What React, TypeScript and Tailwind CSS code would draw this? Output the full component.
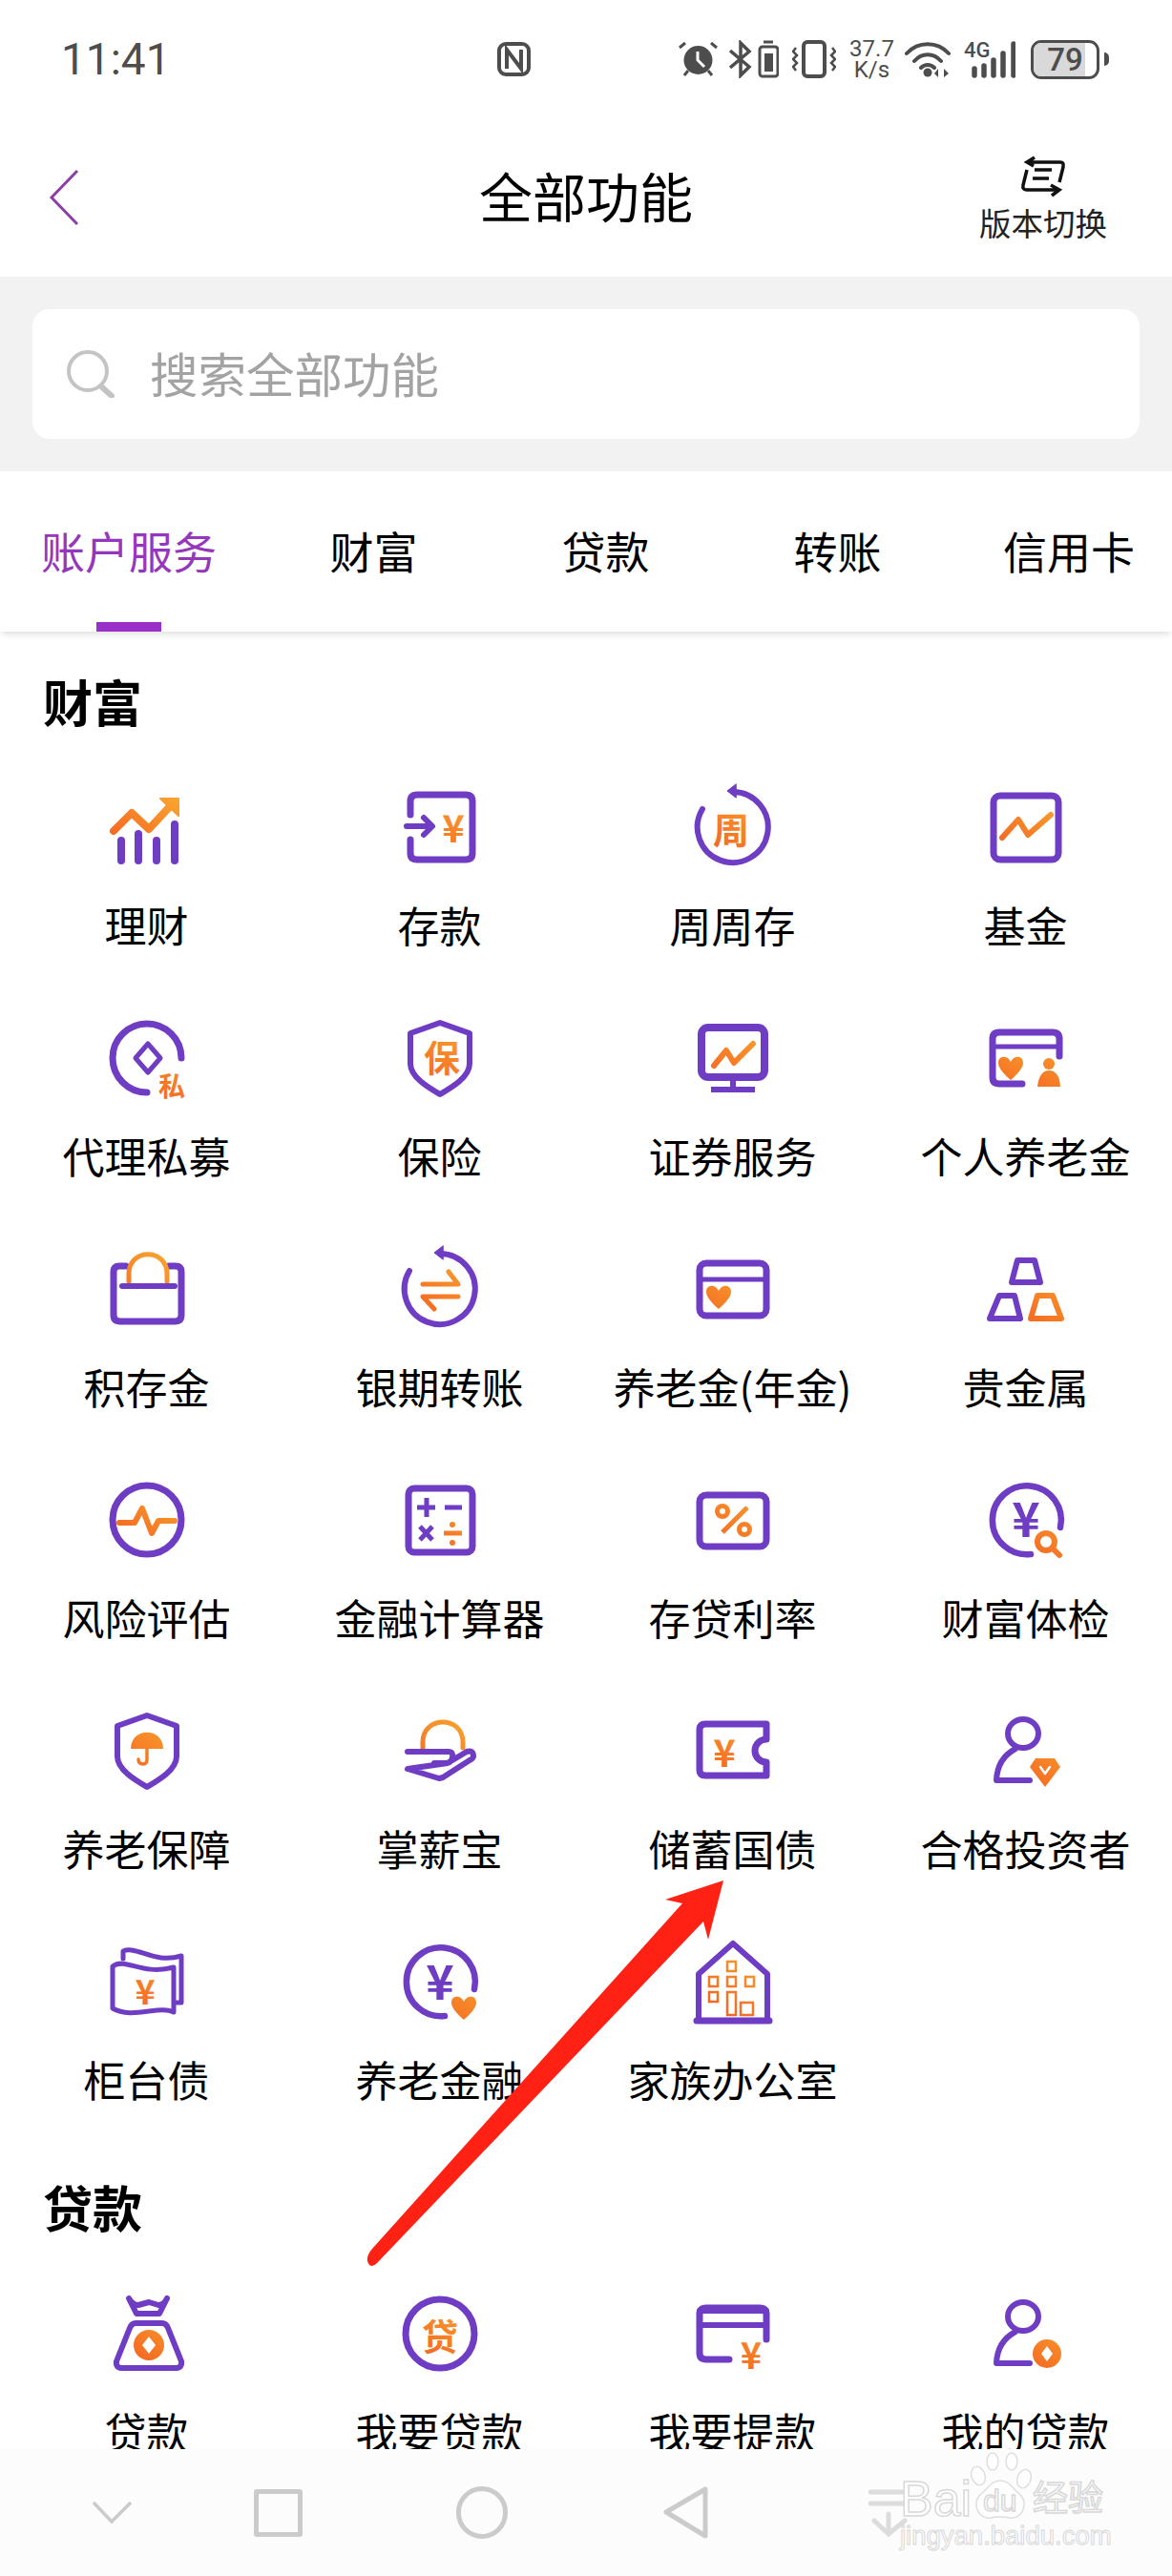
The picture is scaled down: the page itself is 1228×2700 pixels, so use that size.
import type { ReactNode } from 'react'

const P = '#6f3cc4'
const O = 'url(#orange)'

function Ico({ children }: { children: ReactNode }) {
  return (
    <svg
      viewBox="-50 -50 100 100"
      className="h-[100px] w-[100px] shrink-0"
      fill="none"
      stroke={P}
      strokeWidth={7}
      strokeLinecap="round"
      strokeLinejoin="round"
    >
      {children}
    </svg>
  )
}

function Heart({ x, y, s = 1 }: { x: number; y: number; s?: number }) {
  return (
    <path
      transform={`translate(${x} ${y}) scale(${s})`}
      d="M0 13 C-8 6 -13 0 -13 -5 C-13 -13 -3 -13 0 -6 C3 -13 13 -13 13 -5 C13 0 8 6 0 13Z"
      fill={O}
      stroke="none"
    />
  )
}

function Glyph({ x, y, size, children, fill = O }: { x: number; y: number; size: number; children: string; fill?: string }) {
  return (
    <text
      x={x}
      y={y}
      fontSize={size}
      fontWeight={700}
      textAnchor="middle"
      dominantBaseline="central"
      fill={fill}
      stroke="none"
    >
      {children}
    </text>
  )
}

const Zig = ({ dy = 0 }: { dy?: number }) => (
  <path d="M-25 11 L-8 -8 L2 8 L26 -13" transform={`translate(0 ${dy})`} stroke={O} strokeWidth={6} />
)

const LoopRing = () => (
  <>
    <path d="M0 -37 A37 37 0 1 1 -32 -19" strokeWidth={6} />
    <path d="M3 -45 L-6 -38 L3 -31Z" fill={P} strokeWidth={1} />
  </>
)

const OpenRing = () => <path d="M36 8 A36 36 0 1 0 5 36" strokeWidth={6.5} />

const Shield = () => <path d="M0 -37 L31 -26 V6 C31 20 12 31 0 38 C-12 31 -31 20 -31 6 V-26Z" strokeWidth={6} />

const Person = () => (
  <>
    <ellipse cx={-3} cy={-18} rx={16} ry={15} strokeWidth={6} />
    <path d="M-11 -2 Q-30 8 -31 31 H4" strokeWidth={6} />
  </>
)

const OpenCard = () => (
  <>
    <path d="M-4 27 H-28 Q-35 27 -35 20 V-20 Q-35 -27 -28 -27 H28 Q35 -27 35 -20 V6" />
    <path d="M-35 -9 H35" strokeWidth={6} />
    <path d="M-35 -24 H35" strokeWidth={6} />
  </>
)

const icons: Record<string, ReactNode> = {
  理财: (
    <>
      <path d="M-27 14 V35 M-9 7 V35 M10 14 V35 M29 -3 V35" strokeWidth={8} />
      <path d="M-35 4 L-16 -15 L2 2 L27 -25" stroke={O} strokeWidth={8} />
      <path d="M14 -30 H33 V-12Z" fill={O} stroke={O} strokeWidth={2} />
    </>
  ),
  存款: (
    <>
      <path d="M-31 -13 V-27 Q-31 -34 -24 -34 H27 Q34 -34 34 -27 V27 Q34 34 27 34 H-24 Q-31 34 -31 27 V13" />
      <path d="M-35 -1 H-10 M-17 -10 L-8 -1 L-17 8" strokeWidth={6} />
      <Glyph x={14} y={-1} size={40}>¥</Glyph>
    </>
  ),
  周周存: (
    <>
      <LoopRing />
      <Glyph x={-2} y={0} size={38}>周</Glyph>
    </>
  ),
  基金: (
    <>
      <rect x={-34} y={-33} width={68} height={67} rx={7} strokeWidth={7} />
      <Zig />
    </>
  ),
  代理私募: (
    <>
      <path d="M36 0 A36 36 0 1 0 0 36" strokeWidth={7} />
      <path d="M1 -15 L14 0 L1 15 L-12 0Z" strokeWidth={5} />
      <Glyph x={26} y={28} size={28}>私</Glyph>
    </>
  ),
  保险: (
    <>
      <Shield />
      <Glyph x={2} y={-3} size={38}>保</Glyph>
    </>
  ),
  证券服务: (
    <>
      <rect x={-33} y={-32} width={66} height={52} rx={7} strokeWidth={8} />
      <path d="M-20 8 L-7 -8 L1 5 L21 -15" stroke={O} strokeWidth={6} />
      <path d="M0 22 V32 M-23 33 H23" strokeWidth={6} strokeLinecap="butt" />
    </>
  ),
  个人养老金: (
    <>
      <path d="M-4 27 H-28 Q-35 27 -35 20 V-20 Q-35 -27 -28 -27 H28 Q35 -27 35 -20 V-2" />
      <path d="M-35 -12 H35" strokeWidth={5} />
      <Heart x={-16} y={10} />
      <circle cx={24} cy={6} r={6} fill={O} stroke="none" />
      <path d="M12 30 Q14 13 24 13 Q35 13 36 30Z" fill={O} stroke="none" />
    </>
  ),
  积存金: (
    <>
      <path d="M-22 -24 H-29 Q-35 -24 -35 -18 V27 Q-35 34 -28 34 H29 Q36 34 36 27 V-18 Q36 -24 30 -24 H23" strokeWidth={7} />
      <path d="M-19 -8 V-16 C-19 -43 21 -43 21 -16 V-8" stroke={O} strokeWidth={5} />
      <path d="M-26 -3 H29" strokeWidth={6} />
    </>
  ),
  银期转账: (
    <>
      <LoopRing />
      <path d="M-18 -5 H19 L9 -18 M19 8 H-18 L-6 21" stroke={O} strokeWidth={5} />
    </>
  ),
  '养老金(年金)': (
    <>
      <rect x={-35} y={-27} width={70} height={55} rx={7} />
      <path d="M-35 -10 H35" strokeWidth={5} />
      <Heart x={-15} y={8} />
    </>
  ),
  贵金属: (
    <>
      <path d="M-9 -30 H9 L15 -7 H-15Z" strokeWidth={6} />
      <path d="M-28 7 H-12 L-6 31 H-38Z" strokeWidth={6} />
      <path d="M12 7 H28 L37 31 H5Z" stroke={O} strokeWidth={6} />
    </>
  ),
  风险评估: (
    <>
      <circle r={36} />
      <path d="M-29 3 H-13 L-5 -12 L5 14 L12 1 H29" stroke={O} strokeWidth={6} />
    </>
  ),
  金融计算器: (
    <>
      <rect x={-33} y={-33} width={67} height={67} rx={6} />
      <path d="M-24 -13 H-5 M-14 -23 V-3 M5 -13 H23 M-21 7 L-8 21 M-8 7 L-21 21" strokeWidth={5} strokeLinecap="butt" />
      <path d="M4 14 H23" stroke={O} strokeWidth={5} strokeLinecap="butt" />
      <circle cx={13} cy={5} r={3} fill={O} stroke="none" />
      <circle cx={13} cy={24} r={3} fill={O} stroke="none" />
    </>
  ),
  存贷利率: (
    <>
      <rect x={-35} y={-26} width={70} height={54} rx={7} strokeWidth={7} />
      <circle cx={-11} cy={-9} r={5.5} stroke={O} strokeWidth={5} />
      <circle cx={12} cy={10} r={5.5} stroke={O} strokeWidth={5} />
      <path d="M-11 13 L15 -13" stroke={O} strokeWidth={5} strokeLinecap="butt" />
    </>
  ),
  财富体检: (
    <>
      <OpenRing />
      <Glyph x={0} y={-4} size={50} fill={P}>¥</Glyph>
      <circle cx={21} cy={23} r={9} fill="#fff" stroke={O} strokeWidth={6} />
      <path d="M28 30 L35 37" stroke={O} strokeWidth={6} />
    </>
  ),
  养老保障: (
    <>
      <Shield />
      <path d="M-17 -2 C-17 -25 17 -25 17 -2Z" fill={O} stroke="none" />
      <path d="M0 -4 V9 Q0 14 -4 14 Q-9 14 -9 9" stroke={O} strokeWidth={3.5} />
    </>
  ),
  掌薪宝: (
    <>
      <path d="M-18 -3 V-9 C-18 -37 24 -37 24 -9 V-3" stroke={O} strokeWidth={5} />
      <path d="M-34 1 H9 Q14 1 13 7 Q12 13 6 13 H-6 M8 13 L28 1 Q35 -1 35 6 Q35 8 31 10 L3 28 L-1 29 L-34 19Z" strokeWidth={6} />
    </>
  ),
  储蓄国债: (
    <>
      <path d="M-29 -28 H35 V-12 A12 12 0 0 0 35 12 V26 H-29 Q-35 26 -35 20 V-22 Q-35 -28 -29 -28Z" />
      <Glyph x={-9} y={0} size={40}>¥</Glyph>
    </>
  ),
  合格投资者: (
    <>
      <Person />
      <path d="M10 8 H30 L36 17 L20 38 L4 17Z" fill={O} stroke="none" />
      <path d="M15 17 L20 24 L25 17" stroke="#fff" strokeWidth={2.5} />
    </>
  ),
  柜台债: (
    <>
      <path d="M-25 -24 V-32 C-10 -38 8 -18 36 -27 V22 H31" strokeWidth={5} />
      <path d="M-36 -16 C-22 -26 -6 -6 28 -15 V32 C14 24 -16 40 -36 28Z" strokeWidth={5} />
      <Glyph x={-2} y={8} size={36}>¥</Glyph>
    </>
  ),
  养老金融: (
    <>
      <OpenRing />
      <Glyph x={0} y={-3} size={50} fill={P}>¥</Glyph>
      <Heart x={25} y={27} />
    </>
  ),
  家族办公室: (
    <>
      <path d="M-36 38 V-8 L0 -40 L36 -8 V38" strokeWidth={6} />
      <path d="M-38 41 H38" strokeWidth={7} />
      <g stroke={O} strokeWidth={2.5} strokeLinecap="butt" strokeLinejoin="miter">
        <rect x={-6} y={-21} width={9} height={10} />
        <rect x={-25} y={-5} width={9} height={10} />
        <rect x={-6} y={-5} width={9} height={10} />
        <rect x={13} y={-5} width={9} height={10} />
        <rect x={-25} y={11} width={9} height={10} />
        <path d="M-6 11 H3 V35 H-6Z" />
        <rect x={8} y={22} width={13} height={13} />
      </g>
    </>
  ),
  贷款: (
    <>
      <path d="M-19 -37 L-11 -21 H13 L21 -37 Q18 -30 12 -30 L2 -33 L-9 -30 Q-15 -30 -19 -37Z" strokeWidth={6} />
      <path d="M-12 -11 H16 Q20 -11 22 -6 L36 29 Q37 36 30 36 H-26 Q-33 36 -32 29 L-18 -6 Q-16 -11 -12 -11Z" strokeWidth={6} />
      <ellipse cx={2} cy={12} rx={16} ry={16} fill={O} stroke="none" />
      <path d="M2 3 L9 12 L2 21 L-5 12Z" fill="#fff" stroke="none" />
    </>
  ),
  我要贷款: (
    <>
      <circle r={36} />
      <Glyph x={0} y={0} size={38}>贷</Glyph>
    </>
  ),
  我要提款: (
    <>
      <OpenCard />
      <Glyph x={19} y={20} size={38}>¥</Glyph>
    </>
  ),
  我的贷款: (
    <>
      <Person />
      <circle cx={22} cy={21} r={15} fill={O} stroke="none" />
      <path d="M22 13 L28 21 L22 29 L16 21Z" fill="#fff" stroke="none" />
    </>
  ),
}

const wealth = [
  '理财', '存款', '周周存', '基金',
  '代理私募', '保险', '证券服务', '个人养老金',
  '积存金', '银期转账', '养老金(年金)', '贵金属',
  '风险评估', '金融计算器', '存贷利率', '财富体检',
  '养老保障', '掌薪宝', '储蓄国债', '合格投资者',
  '柜台债', '养老金融', '家族办公室',
]
const loans = ['贷款', '我要贷款', '我要提款', '我的贷款']
const tabs = ['账户服务', '财富', '贷款', '转账', '信用卡']

function Item({ name }: { name: string }) {
  return (
    <div className="flex h-[242px] flex-col items-center">
      <Ico>{icons[name]}</Ico>
      <div className="mt-[27px] h-[50px] whitespace-nowrap text-[44px] leading-[50px] text-black">{name}</div>
    </div>
  )
}

function StatusBar() {
  return (
    <div className="flex h-[124px] items-center text-[#4d4d4d]">
      <span className="ml-[64px] w-[113px] font-['Roboto',sans-serif] text-[46px] leading-none">11:41</span>
      <svg viewBox="0 0 35 36" className="ml-[344px] h-[36px] w-[35px]" fill="none" stroke="currentColor">
        <rect x="2" y="2" width="31" height="32" rx="7" strokeWidth="4" />
        <path d="M10 28 V8 L25 28 V8" strokeWidth="4" />
      </svg>
      <svg viewBox="0 0 41 38" className="ml-[155px] h-[38px] w-[41px]" fill="currentColor">
        <circle cx="20.5" cy="20" r="15" />
        <path d="M20 11 V20 L27 27" fill="none" stroke="#fff" strokeWidth="3" />
        <path d="M1 7 L7 2 M40 7 L34 2 M6 36 L10 31 M35 36 L31 31" stroke="currentColor" strokeWidth="3" />
      </svg>
      <svg viewBox="0 0 52 40" className="ml-[12px] h-[40px] w-[52px]" fill="none" stroke="currentColor">
        <path d="M1 11 L21 28 L12 37 V3 L21 12 L1 29" strokeWidth="3.5" />
        <path d="M36 2 H46" strokeWidth="3" />
        <rect x="32" y="7" width="19" height="31" rx="3" strokeWidth="3" />
        <rect x="37" y="14" width="9" height="19" fill="currentColor" stroke="none" />
      </svg>
      <svg viewBox="0 0 46 40" className="ml-[14px] h-[40px] w-[46px]" fill="none" stroke="currentColor">
        <rect x="12" y="2" width="22" height="36" rx="4" strokeWidth="4" />
        <path d="M4 8 L1 12 L5 16 L1 20 L5 24 L1 28 L4 32 M42 8 L45 12 L41 16 L45 20 L41 24 L45 28 L42 32" strokeWidth="2.5" />
      </svg>
      <div className="ml-[14px] flex w-[47px] flex-col items-center font-['Roboto',sans-serif] text-[24px] leading-[22px]">
        <span>37.7</span>
        <span>K/s</span>
      </div>
      <svg viewBox="0 0 48 40" className="ml-[11px] h-[40px] w-[48px]" fill="none" stroke="currentColor" strokeLinecap="round">
        <path d="M2 14 C14 1 34 1 46 14 M10 22 C18 13 30 13 38 22 M17 29 C21 25 27 25 31 29" strokeWidth="4" />
        <circle cx="24" cy="34" r="4.5" fill="currentColor" stroke="none" />
        <path d="M35 30 V39 L31 35Z M41 30 V39 L46 35Z" fill="currentColor" stroke="none" />
      </svg>
      <div className="relative ml-[14px] h-[40px] w-[54px]">
        <span className="absolute left-0 top-0 font-['Roboto',sans-serif] text-[22px] font-medium leading-[22px]">4G</span>
        <svg viewBox="0 0 54 40" className="h-[40px] w-[54px]" stroke="currentColor" strokeWidth="5.5" strokeLinecap="round">
          <path d="M11 30 V37 M21 27 V37 M31 21 V37 M41 14 V37 M52 4 V37" />
        </svg>
      </div>
      <div className="relative ml-[16px] flex h-[41px] w-[72px] items-center justify-center overflow-hidden rounded-[11px] border-[3px] border-[#4d4d4d]">
        <div className="absolute inset-y-0 left-0 w-[54px] bg-[#d9d9d9]" />
        <span className="relative font-['Roboto',sans-serif] text-[33px] font-medium leading-none">79</span>
      </div>
      <div className="ml-[5px] h-[14px] w-[5px] rounded-r-full bg-[#4d4d4d]" />
    </div>
  )
}

function Header() {
  return (
    <div className="grid h-[166px] grid-cols-[1fr_auto_1fr] items-center">
      <svg viewBox="0 0 34 60" className="ml-[50px] h-[60px] w-[34px]" fill="none" stroke="#8d3fa8" strokeWidth="3">
        <path d="M31 2 L4 30 L31 58" />
      </svg>
      <div className="mb-[6px] text-[56px] leading-none text-black">全部功能</div>
      <div className="mr-[68px] flex flex-col items-center justify-self-end">
        <svg viewBox="0 0 48 44" className="h-[44px] w-[48px]" fill="none" stroke="#111" strokeWidth="3.5">
          <path d="M15 2 L7 7 L14 11 M8 7 H42 Q46 7 45 12 L41 28 M7 15 L3 31 Q2 36 7 36 H40 M32 31 L41 36 L33 42 M15 15 H33 M13 24 H30" />
        </svg>
        <span className="mt-[8px] text-[33.5px] leading-[36px] text-[#222]">版本切换</span>
      </div>
    </div>
  )
}

function Search() {
  return (
    <div className="bg-[#f2f2f2] px-[34px] py-[34px]">
      <div className="flex h-[136px] items-center rounded-[18px] bg-white pl-[36px]">
        <svg viewBox="0 0 50 50" className="h-[50px] w-[50px]" fill="none" stroke="#c4c4c4" strokeWidth="4" strokeLinecap="round">
          <circle cx="22" cy="22" r="20" />
          <path d="M36 38 L47 48" strokeWidth="6" />
        </svg>
        <span className="mb-[3px] ml-[37px] text-[50.5px] leading-none text-[#a3a3a3]">搜索全部功能</span>
      </div>
    </div>
  )
}

function Tabs() {
  return (
    <div className="relative z-10 grid h-[168px] grid-cols-[270px_243px_243px_243px_242px] items-center overflow-hidden bg-white shadow-[0_5px_6px_-2px_rgba(0,0,0,0.12)]">
      {tabs.map((t, i) => (
        <div key={t} className={`relative flex h-full items-center justify-center whitespace-nowrap text-[46px] leading-none ${i === 0 ? 'text-[#9537bd]' : 'text-black'}`}>
          <span className="mb-[5px]">{t}</span>
          {i === 0 && <div className="absolute bottom-0 left-1/2 h-[10px] w-[68px] -translate-x-1/2 bg-[#9b30c9]" />}
        </div>
      ))}
    </div>
  )
}

function NavBar() {
  return (
    <div className="relative flex h-[133px] items-center bg-[#fcfcfc] pl-[96px]">
      <svg viewBox="0 0 43 24" className="mt-[-1px] h-[24px] w-[43px]" fill="none" stroke="#cbcbcb" strokeWidth="3.5">
        <path d="M2 2 L21 22 L41 2" />
      </svg>
      <div className="ml-[127px] h-[50px] w-[51px] rounded-[3px] border-[5px] border-[#cbcbcb]" />
      <div className="ml-[161px] h-[55px] w-[54px] rounded-full border-[5px] border-[#cbcbcb]" />
      <svg viewBox="0 0 47 55" className="ml-[163px] h-[55px] w-[47px]" fill="none" stroke="#cbcbcb" strokeWidth="5" strokeLinejoin="round">
        <path d="M44 3 V52 L3 27Z" />
      </svg>
      <svg viewBox="0 0 41 50" className="ml-[168px] h-[50px] w-[41px]" fill="none" stroke="#dcdcdc" strokeWidth="5" strokeLinecap="round">
        <path d="M2 3 H40 M2 15 H40 M21 26 V47 M6 33 L21 47 L38 33" />
      </svg>
      {/* 水印 */}
      <div className="absolute left-[943px] top-0 h-[110px] w-[220px] text-[#fefefe]">
        <svg viewBox="0 0 90 80" className="absolute left-[70px] top-0 h-[80px] w-[90px]" fill="#fefefe" stroke="#dedede" strokeWidth="1.5">
          <ellipse cx="27" cy="13" rx="6" ry="9" />
          <ellipse cx="47" cy="13" rx="6" ry="9" />
          <ellipse cx="12" cy="28" rx="7" ry="10" transform="rotate(-20 12 28)" />
          <ellipse cx="60" cy="31" rx="7" ry="10" transform="rotate(20 60 31)" />
          <path d="M35 33 C45 33 48 42 55 47 C66 56 58 74 45 72 Q35 70 25 72 C12 74 4 56 15 47 C22 42 25 33 35 33Z" />
        </svg>
        <span className="absolute left-0 top-[26px] font-['Liberation_Sans',sans-serif] text-[52px] leading-none [-webkit-text-stroke:1.5px_#d8d8d8]">Bai</span>
        <span className="absolute left-[87px] top-[38px] font-['Liberation_Sans',sans-serif] text-[32px] leading-none [-webkit-text-stroke:1.5px_#d8d8d8]">du</span>
        <span className="absolute left-[139px] top-[31px] whitespace-nowrap text-[37px] leading-none [-webkit-text-stroke:1.5px_#d8d8d8]">经验</span>
        <span className="absolute left-0 top-[77px] whitespace-nowrap font-['Liberation_Sans',sans-serif] text-[27.5px] leading-none [-webkit-text-stroke:1px_#d8d8d8]">jingyan.baidu.com</span>
      </div>
    </div>
  )
}

export default function App() {
  return (
    <div className="relative flex h-[2700px] w-[1228px] flex-col overflow-hidden bg-white font-['Noto_Sans_CJK_SC','Noto_Sans',sans-serif]">
      <svg className="absolute h-0 w-0">
        <defs>
          <linearGradient id="orange" gradientUnits="userSpaceOnUse" x1="30" y1="-40" x2="-25" y2="40">
            <stop offset="0" stopColor="#f9ab30" />
            <stop offset="1" stopColor="#f4581f" />
          </linearGradient>
        </defs>
      </svg>
      <StatusBar />
      <Header />
      <Search />
      <Tabs />
      <div className="h-[1905px] overflow-hidden">
        <h2 className="ml-[45px] mt-[38px] h-[70px] text-[52px] font-bold leading-[70px] text-black">财富</h2>
        <div className="mt-[47px] grid grid-cols-4">
          {wealth.map((n) => (
            <Item key={n} name={n} />
          ))}
        </div>
        <h2 className="ml-[45px] mt-[9px] h-[70px] text-[52px] font-bold leading-[70px] text-black">贷款</h2>
        <div className="mt-[48px] grid grid-cols-4">
          {loans.map((n) => (
            <Item key={n} name={n} />
          ))}
        </div>
      </div>
      <NavBar />
      {/* 红色箭头标注 */}
      <svg viewBox="0 0 1228 2700" className="pointer-events-none absolute left-0 top-0 z-20 h-[2700px] w-[1228px]">
        <path
          d="M758 1971 L742 2033 L737 2014 L395 2372 Q388 2379 385 2370 Q384 2364 390 2357 L715 1995 L697 1991Z"
          fill="#ff2113"
        />
      </svg>
    </div>
  )
}
